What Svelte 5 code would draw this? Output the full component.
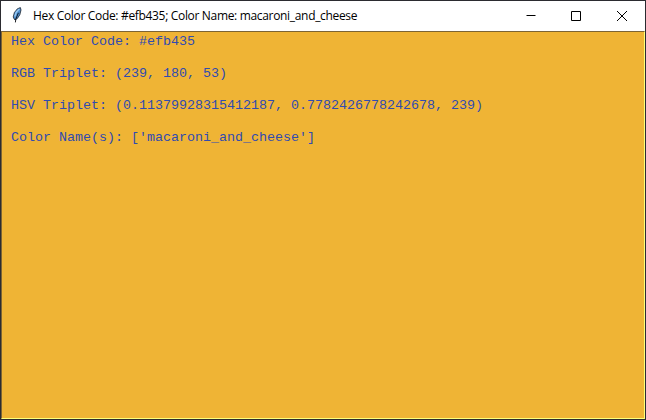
<script>
  const name = 'macaroni_and_cheese';
  const hex = '#efb435';
  const lines = [
    `Hex Color Code: ${hex}`,
    'RGB Triplet: (239, 180, 53)',
    'HSV Triplet: (0.11379928315412187, 0.7782426778242678, 239)',
    `Color Name(s): ['${name}']`
  ];
</script>

<div class="window">
  <header>
    <svg class="feather" width="16" height="18" viewBox="0 0 16 18">
      <path d="M5.2 12 L4.2 10 L5.4 5.5 L8.4 1.8 L11.4 .6 L12 3 L10.8 7.8 L8.4 11.4 L6 13Z" fill="#4f8fd0" stroke="#1c222c" stroke-width=".8" />
      <path d="M5.8 9.5 L7.3 5.2 L10.4 1.9" fill="none" stroke="#9bcbf2" stroke-width="1.3" />
      <path d="M6.4 15.4 L6.8 12 L9.4 5.8" fill="none" stroke="#080a0e" stroke-width=".9" />
    </svg>
    <span class="title">Hex Color Code: {hex}; Color Name: {name}</span>
    <div class="controls">
      <button aria-label="Minimize"><svg width="10" height="10"><path d="M1 4.5H10" /></svg></button>
      <button aria-label="Maximize"><svg width="10" height="10"><path d="M.5 .5H9.5V9.5H.5Z" /></svg></button>
      <button aria-label="Close"><svg width="10" height="10"><path d="M0 0L10 10M10 0L0 10" /></svg></button>
    </div>
  </header>
  <main>
    {#each lines as line}
      <p>{line}</p>
    {/each}
  </main>
</div>

<style>
  :global(body) { margin: 0; overflow: hidden; }
  .window {
    box-sizing: border-box;
    width: 646px;
    height: 420px;
    border: 1px solid #2b2b30;
    display: flex;
    flex-direction: column;
    background: #fff;
  }
  header {
    height: 30px;
    flex: none;
    display: flex;
    align-items: center;
  }
  .feather { margin: 0 0 0 8px; flex: none; }
  .title {
    margin-left: 8px;
    font: 12px/16px "Open Sans", "Noto Sans", sans-serif;
    letter-spacing: -0.325px;
    color: #000;
    white-space: pre;
  }
  .controls { margin-left: auto; display: flex; }
  button {
    width: 46px;
    height: 29px;
    padding: 0;
    border: 0;
    background: none;
    display: flex;
    align-items: center;
    justify-content: center;
  }
  button svg { display: block; overflow: visible; }
  button path { fill: none; stroke: #000; stroke-width: 1; }
  button:first-child path { stroke-linecap: butt; transform: translateX(0.5px); }
  main {
    flex: 1;
    box-sizing: border-box;
    background: #efb435;
    border: 1px solid;
    border-color: #7c6434 #ffff79 #ffff79 #7c6434;
    padding: 2px 9px;
  }
  p {
    margin: 0 0 16px;
    font: 13.333px/16px "Liberation Mono", monospace;
    color: #304bb0;
    white-space: pre;
  }
</style>
